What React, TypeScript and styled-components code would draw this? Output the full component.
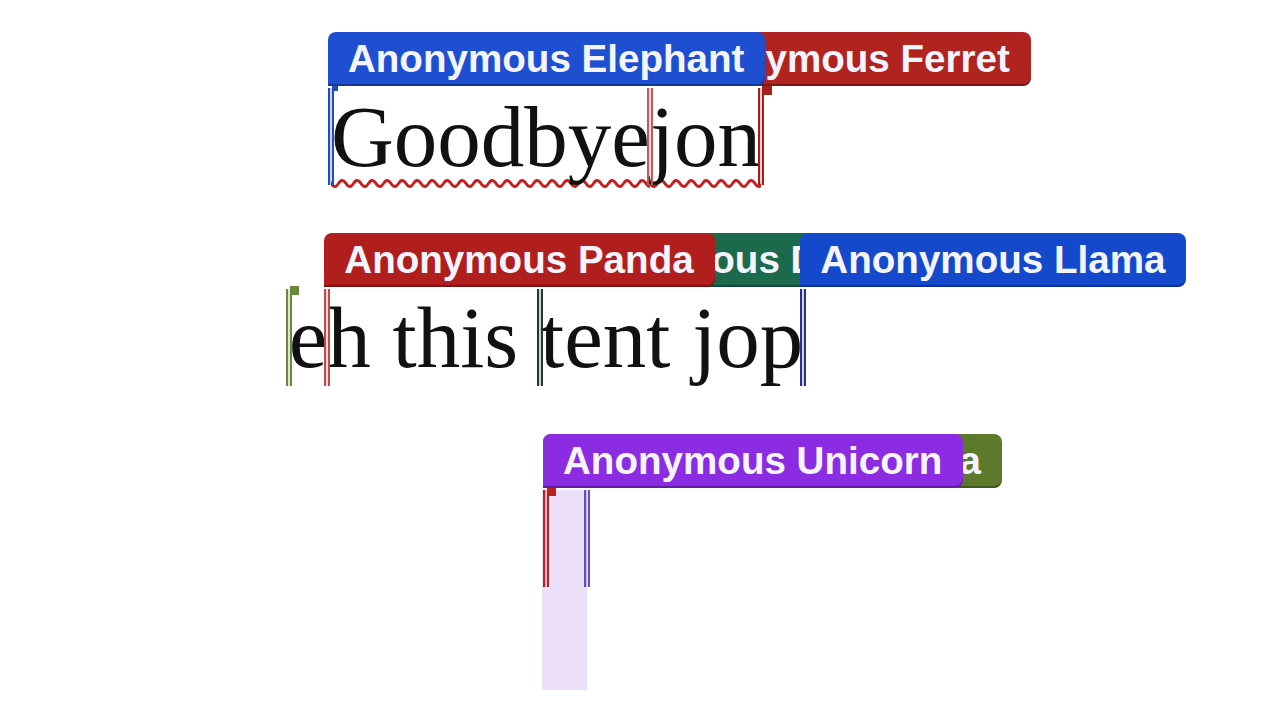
import React from 'react';
import styled, { createGlobalStyle } from 'styled-components';

const GlobalStyle = createGlobalStyle`
  html, body {
    margin: 0;
    padding: 0;
    background: #ffffff;
  }
  body {
    overflow: hidden;
  }
`;

const Editor = styled.div`
  width: 1092px;
  height: 720px;
  padding-top: 88px;
  box-sizing: border-box;
`;

const Paragraph = styled.p<{ $indent?: number }>`
  margin: 0 0 104px;
  padding-left: ${(p) => p.$indent || 0}px;
  font-family: 'Liberation Serif', 'Times New Roman', serif;
  font-size: 87px;
  line-height: 97px;
  color: #111111;
  text-align: center;
  white-space: pre;
`;

const Misspelled = styled.span`
  text-decoration: underline wavy #c8201e;
  text-decoration-thickness: 3px;
  text-decoration-skip-ink: none;
  text-underline-offset: 13px;
`;

const CaretMark = styled.span<{ $color: string }>`
  position: relative;
  padding: 0 1px;
  margin: 0 -3px;
  border-left: 2px solid ${(p) => p.$color};
  border-right: 2px solid ${(p) => p.$color};
  background: ${(p) => p.$color}38;
`;

const Flag = styled.span<{ $color: string; $size: number }>`
  position: absolute;
  top: -3px;
  left: 2px;
  width: ${(p) => p.$size}px;
  height: ${(p) => p.$size}px;
  background: ${(p) => p.$color};
`;

const Label = styled.span<{ $color: string; $z: number }>`
  position: absolute;
  left: -2px;
  bottom: calc(100% + 2px);
  z-index: ${(p) => p.$z};
  padding: 0 21px 0 20px;
  height: 54px;
  border-radius: 8px 8px 8px 0;
  background: ${(p) => p.$color};
  box-shadow: inset 0 -2px 0 rgba(0, 0, 0, 0.3);
  color: #f4f4ff;
  font-family: 'Liberation Sans', Arial, sans-serif;
  font-weight: 700;
  font-size: 38.6px;
  line-height: 54px;
  white-space: nowrap;
  text-decoration: none;
`;

const Selected = styled.span`
  display: inline-block;
  vertical-align: top;
  width: 41px;
  height: 200px;
  margin-left: -4px;
  padding-left: 4px;
  background: #ebdff9;
`;

type User = { name: string; color: string; z: number };

const Caret = ({
  color,
  flag,
  labels = [],
}: {
  color: string;
  flag?: number;
  labels?: User[];
}) => (
  <CaretMark $color={color}>
    {flag ? <Flag $color={color} $size={flag} /> : null}
    {labels.map((u) => (
      <Label key={u.name} $color={u.color} $z={u.z}>
        {u.name}
      </Label>
    ))}
  </CaretMark>
);

const elephant = { name: 'Anonymous Elephant', color: '#1d4fd0', z: 4 };
const ferret = { name: 'Anonymous Ferret', color: '#b0231f', z: 3 };
const panda = { name: 'Anonymous Panda', color: '#b01f1d', z: 4 };
const dingo = { name: 'Anonymous Dingo', color: '#1b6a4c', z: 2 };
const llama = { name: 'Anonymous Llama', color: '#1549cc', z: 4 };
const unicorn = { name: 'Anonymous Unicorn', color: '#8b2be2', z: 4 };
const chinchilla = { name: 'Anonymous Chinchilla', color: '#5d7a2c', z: 3 };

const App = () => (
  <>
    <GlobalStyle />
    <Editor>
      <Paragraph>
        <Caret color="#2548c4" flag={6} labels={[elephant]} />
        <Misspelled>
          Goodbye
          <Caret color="#c25a5a" labels={[ferret]} />
          jon
        </Misspelled>
        <Caret color="#a3201c" flag={10} />
      </Paragraph>
      <Paragraph>
        <Caret color="#6a8a3a" flag={9} />
        e
        <Caret color="#c04848" labels={[panda]} />
        {'h this '}
        <Caret color="#1d3a2c" labels={[dingo]} />
        tent jop
        <Caret color="#2d2f8c" labels={[llama]} />
      </Paragraph>
      <Paragraph $indent={41}>
        <Caret color="#b8231f" flag={9} labels={[unicorn, chinchilla]} />
        <Selected />
        <Caret color="#6650b8" />
      </Paragraph>
    </Editor>
  </>
);

export default App;
